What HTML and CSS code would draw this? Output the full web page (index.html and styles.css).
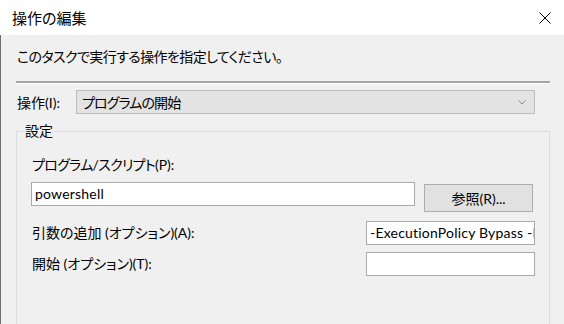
FILE: index.html
```html
<!DOCTYPE html>
<html lang="ja">
<head>
  <meta charset="UTF-8">
  <title>操作の編集</title>
  <link rel="stylesheet" href="styles.css">
</head>
<body>
  <div class="dialog">
    <div class="titlebar">
      <span class="title">操作の編集</span>
      <svg class="close-btn" width="12" height="12" viewBox="0 0 12 12">
        <path d="M0.5 0.5 L11.5 11.5 M11.5 0.5 L0.5 11.5" stroke="#000" stroke-width="1" fill="none"/>
      </svg>
    </div>
    <div class="content">
      <p class="intro">このタスクで実行する操作を指定してください。</p>
      <div class="separator"></div>
      <div class="action-row">
        <span class="label">操作(I):</span>
        <div class="combo">
          <span class="combo-text">プログラムの開始</span>
          <svg width="8" height="5" viewBox="0 0 8 5">
            <path d="M0.5 0.5 L4 4 L7.5 0.5" stroke="#8a8a8a" stroke-width="1" fill="none"/>
          </svg>
        </div>
      </div>
      <fieldset class="settings">
        <legend>設定</legend>
        <div class="field-label"><span class="kana">プログラム/スクリプト</span>(P):</div>
        <div class="program-row">
          <div class="textbox program">powershell</div>
          <button class="browse-btn">参照(R)...</button>
        </div>
        <div class="option-row args">
          <span class="field-label">引数の追加 (オプション)(A):</span>
          <div class="textbox short">-ExecutionPolicy Bypass -File</div>
        </div>
        <div class="option-row start">
          <span class="field-label">開始 (オプション)(T):</span>
          <div class="textbox short"></div>
        </div>
      </fieldset>
    </div>
  </div>
</body>
</html>
```
FILE: styles.css
```css
body {
  margin: 0;
  padding: 0;
  width: 564px;
  height: 324px;
  overflow: hidden;
  font-family: Lato, "Noto Sans CJK JP", sans-serif;
  font-feature-settings: "palt";
  font-size: 14px;
  color: #000;
  background-color: #f0f0f0;
}

.dialog {
  height: 324px;
  overflow: hidden;
}

.titlebar {
  height: 35px;
  background-color: #fff;
  display: flex;
  align-items: center;
  justify-content: space-between;
  padding: 0 13px 0 12px;
}

.title {
  font-size: 15px;
}

.close-btn {
  margin-top: 1px;
}

.content {
  border-left: 1px solid #6e6e6e;
  height: 289px;
  padding: 0 14px 0 15px;
}

.intro {
  margin: 0;
  padding: 12px 0 0 1px;
  line-height: 20px;
  letter-spacing: -0.6px;
}

.separator {
  margin-top: 14px;
  border-top: 2px solid #a5a5a5;
  border-bottom: 1px solid #fff;
}

.action-row {
  margin-top: 6px;
  display: flex;
  align-items: center;
  padding: 0 15px 0 1px;
}

.action-row .label {
  width: 59px;
}

.combo {
  flex: 1;
  height: 24px;
  box-sizing: border-box;
  background-color: #e3e3e3;
  border: 1px solid #bdbdbd;
  display: flex;
  align-items: center;
  justify-content: space-between;
  padding: 0 8px 0 5px;
}

.combo-text {
  letter-spacing: -0.9px;
}

.settings {
  margin: 7px 0 0 0;
  padding: 14px 14px 48px 14px;
  border: 1px solid #dcdcdc;
  border-bottom: none;
}

.settings legend {
  margin-left: -7px;
  padding: 0 1px;
  line-height: 20px;
}

.field-label {
  padding-left: 1px;
  line-height: 20px;
}

.field-label .kana {
  letter-spacing: -0.7px;
}

.program-row {
  margin-top: 7px;
  display: flex;
  align-items: flex-start;
  gap: 9px;
}

.textbox {
  height: 24px;
  box-sizing: border-box;
  background-color: #fff;
  border: 1px solid #a9a9a9;
  padding: 0 3px;
  line-height: 22px;
  white-space: nowrap;
  overflow: hidden;
  letter-spacing: 0.2px;
}

.textbox.program {
  width: 384px;
}

.browse-btn {
  margin-top: 2px;
  width: 109px;
  height: 28px;
  background-color: #e1e1e1;
  border: 1px solid #adadad;
  font-family: inherit;
  font-feature-settings: "palt";
  font-size: 14px;
  color: #000;
  padding: 0;
}

.option-row {
  display: flex;
  align-items: center;
  justify-content: space-between;
}

.option-row.args {
  margin-top: 9px;
}

.option-row.start {
  margin-top: 7px;
}

.textbox.short {
  width: 169px;
}
```
